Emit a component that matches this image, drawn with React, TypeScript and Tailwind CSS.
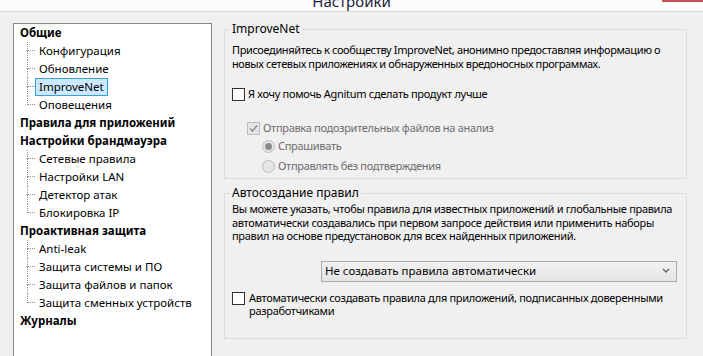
import React from "react";

interface TreeNode {
    label: string;
    children?: string[];
}

const tree: TreeNode[] = [
    { label: "Общие", children: ["Конфигурация", "Обновление", "ImproveNet", "Оповещения"] },
    { label: "Правила для приложений" },
    { label: "Настройки брандмауэра", children: ["Сетевые правила", "Настройки LAN", "Детектор атак", "Блокировка IP"] },
    { label: "Проактивная защита", children: ["Anti-leak", "Защита системы и ПО", "Защита файлов и папок", "Защита сменных устройств"] },
    { label: "Журналы" },
];

const selected = "ImproveNet";

const TreeLabel = ({ text, bold }: { text: string; bold?: boolean }) => (
    <span
        className={`h-[18px] flex items-center px-[3px] border whitespace-nowrap ${
            text === selected ? "bg-[#cce8ff] border-[#3c9fdc]" : "border-transparent"
        } ${bold ? "font-bold" : ""}`}
    >
        {text}
    </span>
);

const SettingsTree = () => (
    <div className="w-[199px] h-[340px] shrink-0 bg-white border border-[#828790] pl-[2px] text-[11.5px] text-black">
        {tree.map((node) => (
            <div key={node.label}>
                <TreeLabel text={node.label} bold />
                {node.children?.map((child, i) => {
                    const last = i === (node.children?.length ?? 0) - 1;
                    return (
                        <div key={child} className="flex h-[18px] ml-[11px]">
                            <div className="w-[8px] flex flex-col">
                                <div className="h-[9px] border-l border-b border-dotted border-[#8c8c8c]" />
                                <div className={`h-[9px] ${last ? "" : "border-l border-dotted border-[#8c8c8c]"}`} />
                            </div>
                            <TreeLabel text={child} />
                        </div>
                    );
                })}
            </div>
        ))}
    </div>
);

const CheckBox = ({ checked, disabled }: { checked?: boolean; disabled?: boolean }) => (
    <span
        className={`w-[13px] h-[13px] shrink-0 border flex items-center justify-center ${
            disabled ? "border-[#bcbcbc] bg-[#e6e6e6]" : "border-[#333333] bg-white"
        }`}
    >
        {checked && (
            <svg width="9" height="9" viewBox="0 0 9 9">
                <path d="M1 4.5 L3.5 7 L8 1.5" fill="none" stroke={disabled ? "#8f8f8f" : "#222"} strokeWidth="1.6" />
            </svg>
        )}
    </span>
);

const Radio = ({ checked }: { checked?: boolean }) => (
    <span className="w-[13px] h-[13px] shrink-0 rounded-full border border-[#bcbcbc] bg-[#e6e6e6] flex items-center justify-center">
        {checked && <span className="w-[7px] h-[7px] rounded-full bg-[#8a8a8a]" />}
    </span>
);

const GroupBox = ({ title, className, children }: { title: string; className: string; children: React.ReactNode }) => (
    <fieldset className={`border border-[#dcdcdc] pl-[7px] pr-2 ${className}`}>
        <legend className="-ml-[2px] px-[2px] text-[12px] leading-[14px] tracking-normal text-black">{title}</legend>
        {children}
    </fieldset>
);

export default function App() {
    return (
        <div className="w-[703px] h-[356px] overflow-hidden bg-[#f0f0f0] flex flex-col" style={{ fontFamily: '"Noto Sans", sans-serif' }}>
            <div className="h-[12px] shrink-0 bg-[#fcfcfc] border-b border-[#d9d9d9] relative overflow-hidden flex justify-center">
                <span className="text-[15px] leading-[18px] -mt-[8px] text-[#1d1d3a]">Настройки</span>
                <span className="absolute right-0 top-0 w-[41px] h-[2px] bg-[#c75050]" />
            </div>

            <div className="flex pl-[13px] pt-[11px]">
                <SettingsTree />

                <div className="ml-[12px] w-[463px] flex flex-col text-[11px] leading-[13.5px] tracking-[-0.3px] text-black">
                    <GroupBox title="ImproveNet" className="h-[157px] -mt-[1px]">
                        <p className="mt-[7px] tracking-[-0.38px]">
                            Присоединяйтесь к сообществу ImproveNet, анонимно предоставляя информацию о новых сетевых приложениях и обнаруженных вредоносных программах.
                        </p>
                        <label className="mt-[17px] h-[14px] flex items-center gap-[3px]">
                            <CheckBox />
                            <span>Я хочу помочь Agnitum сделать продукт лучше</span>
                        </label>
                        <label className="mt-[20px] ml-[15px] h-[14px] flex items-center gap-[3px] text-[#6d6d6d]">
                            <CheckBox checked disabled />
                            <span>Отправка подозрительных файлов на анализ</span>
                        </label>
                        <label className="mt-[4px] ml-[30px] h-[14px] flex items-center gap-[3px] text-[#6d6d6d]">
                            <Radio checked />
                            <span>Спрашивать</span>
                        </label>
                        <label className="mt-[6px] ml-[30px] h-[14px] flex items-center gap-[3px] text-[#6d6d6d]">
                            <Radio />
                            <span>Отправлять без подтверждения</span>
                        </label>
                    </GroupBox>

                    <GroupBox title="Автосоздание правил" className="h-[153px] mt-[7px]">
                        <p className="mt-[2px]">
                            Вы можете указать, чтобы правила для известных приложений и глобальные правила автоматически создавались при первом запросе действия или применить наборы правил на основе предустановок для всех найденных приложений.
                        </p>
                        <div className="mt-[18px] ml-[89px] w-[356px] h-[21px] border border-[#acacac] bg-gradient-to-b from-[#f2f2f2] to-[#e5e5e5] flex items-center justify-between pl-[3px] pr-[6px] text-[11.5px] tracking-normal">
                            <span>Не создавать правила автоматически</span>
                            <svg width="8" height="6" viewBox="0 0 8 6">
                                <path d="M1 1 L4 4 L7 1" fill="none" stroke="#6a6a6a" strokeWidth="1.5" />
                            </svg>
                        </div>
                        <label className="mt-[9px] flex items-start gap-[4px]">
                            <span className="mt-[1px]">
                                <CheckBox />
                            </span>
                            <span>Автоматически создавать правила для приложений, подписанных доверенными разработчиками</span>
                        </label>
                    </GroupBox>
                </div>
            </div>
        </div>
    );
}
